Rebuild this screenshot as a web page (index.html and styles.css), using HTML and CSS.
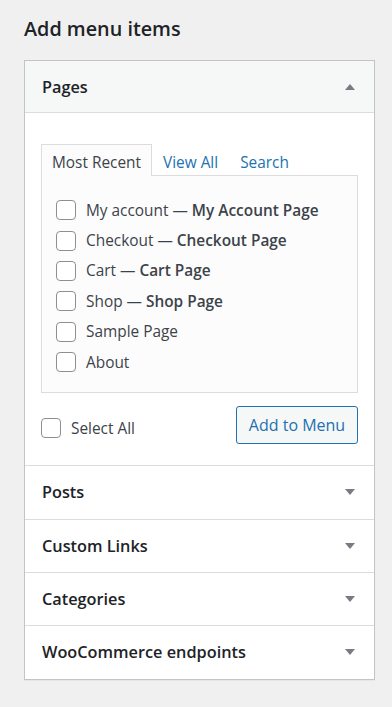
FILE: index.html
```html
<!DOCTYPE html>
<html lang="en">
<head>
  <meta charset="UTF-8" />
  <meta name="viewport" content="width=device-width, initial-scale=1.0" />
  <title>Add menu items</title>
  <link rel="stylesheet" href="styles.css">
</head>
<body>
  <div class="wrap">
    <h2 class="page-title">Add menu items</h2>

    <div class="accordion">
      <!-- Pages (open) -->
      <div class="section open">
        <div class="section-title">
          <span>Pages</span>
          <svg class="arrow" width="10" height="6" viewBox="0 0 10 6"><polygon points="5,0 10,6 0,6" /></svg>
        </div>
        <div class="section-content">
          <ul class="tabs">
            <li class="tab active">Most Recent</li>
            <li class="tab"><a href="#">View All</a></li>
            <li class="tab"><a href="#">Search</a></li>
          </ul>
          <ul class="checklist">
            <li><span class="box"></span>My account — <b>My Account Page</b></li>
            <li><span class="box"></span>Checkout — <b>Checkout Page</b></li>
            <li><span class="box"></span>Cart — <b>Cart Page</b></li>
            <li><span class="box"></span>Shop — <b>Shop Page</b></li>
            <li><span class="box"></span>Sample Page</li>
            <li><span class="box"></span>About</li>
          </ul>
          <div class="actions">
            <label class="select-all"><span class="box"></span>Select All</label>
            <button class="add-btn">Add to Menu</button>
          </div>
        </div>
      </div>

      <!-- collapsed sections -->
      <div class="section">
        <div class="section-title">
          <span>Posts</span>
          <svg class="arrow" width="10" height="6" viewBox="0 0 10 6"><polygon points="0,0 10,0 5,6" /></svg>
        </div>
      </div>
      <div class="section">
        <div class="section-title">
          <span>Custom Links</span>
          <svg class="arrow" width="10" height="6" viewBox="0 0 10 6"><polygon points="0,0 10,0 5,6" /></svg>
        </div>
      </div>
      <div class="section">
        <div class="section-title">
          <span>Categories</span>
          <svg class="arrow" width="10" height="6" viewBox="0 0 10 6"><polygon points="0,0 10,0 5,6" /></svg>
        </div>
      </div>
      <div class="section">
        <div class="section-title">
          <span>WooCommerce endpoints</span>
          <svg class="arrow" width="10" height="6" viewBox="0 0 10 6"><polygon points="0,0 10,0 5,6" /></svg>
        </div>
      </div>
    </div>
  </div>
</body>
</html>
```

FILE: styles.css
```css
/* Base */
* { box-sizing: border-box; margin: 0; padding: 0; }
body {
  font-family: "Open Sans", "Noto Sans", sans-serif;
  background: #f0f0f1;
  color: #3c434a;
}
.wrap {
  padding: 15px 17px 26px 24px;
}
.page-title {
  font-size: 19.8px;
  font-weight: 600;
  color: #1d2327;
  line-height: 28px;
  margin-bottom: 17px;
}

/* Accordion panel */
.accordion {
  background: #fff;
  border: 1px solid #c3c4c7;
  box-shadow: 0 1px 1px rgba(0,0,0,0.04);
}
.section + .section {
  border-top: 1px solid #dcdcde;
}
.section-title {
  display: flex;
  align-items: center;
  justify-content: space-between;
  height: 52.3px;
  padding: 0 19px 0 17px;
  font-size: 16.3px;
  font-weight: 600;
  color: #1d2327;
}
.section.open .section-title {
  background: #f6f7f7;
  height: 52px;
  border-bottom: 1px solid #dcdcde;
}
.arrow polygon { fill: #787c82; }

/* Pages content */
.section-content {
  padding: 31px 16px 21px 16px;
}
.tabs {
  list-style: none;
  display: flex;
  position: relative;
  z-index: 1;
  margin-bottom: -1px;
}
.tab {
  font-size: 15.4px;
  height: 32px;
  line-height: 27px;
  padding: 4px 10px 0;
  border: 1px solid transparent;
  border-bottom: none;
}
.tab a {
  color: #2271b1;
  text-decoration: none;
}
.tab.active {
  background: #fcfcfc;
  border-color: #dcdcde;
  color: #3c434a;
}
.checklist {
  list-style: none;
  background: #fcfcfc;
  border: 1px solid #dcdcde;
  padding: 19px 14px 15px;
}
.checklist li {
  display: flex;
  align-items: center;
  height: 30.4px;
  font-size: 15.4px;
  white-space: pre;
}
.checklist b { font-weight: 600; }
.box {
  display: inline-block;
  flex: none;
  width: 20px;
  height: 20px;
  border: 1px solid #8c8f94;
  border-radius: 4px;
  background: #fff;
  margin-right: 10px;
}

.actions {
  display: flex;
  align-items: center;
  justify-content: space-between;
  margin-top: 13px;
}
.select-all {
  display: flex;
  align-items: center;
  font-size: 15.4px;
  padding-top: 6px;
}
.add-btn {
  font-family: inherit;
  font-size: 16px;
  color: #2271b1;
  background: #f6f7f7;
  border: 1px solid #2271b1;
  border-radius: 3px;
  height: 38px;
  width: 122px;
}
```
